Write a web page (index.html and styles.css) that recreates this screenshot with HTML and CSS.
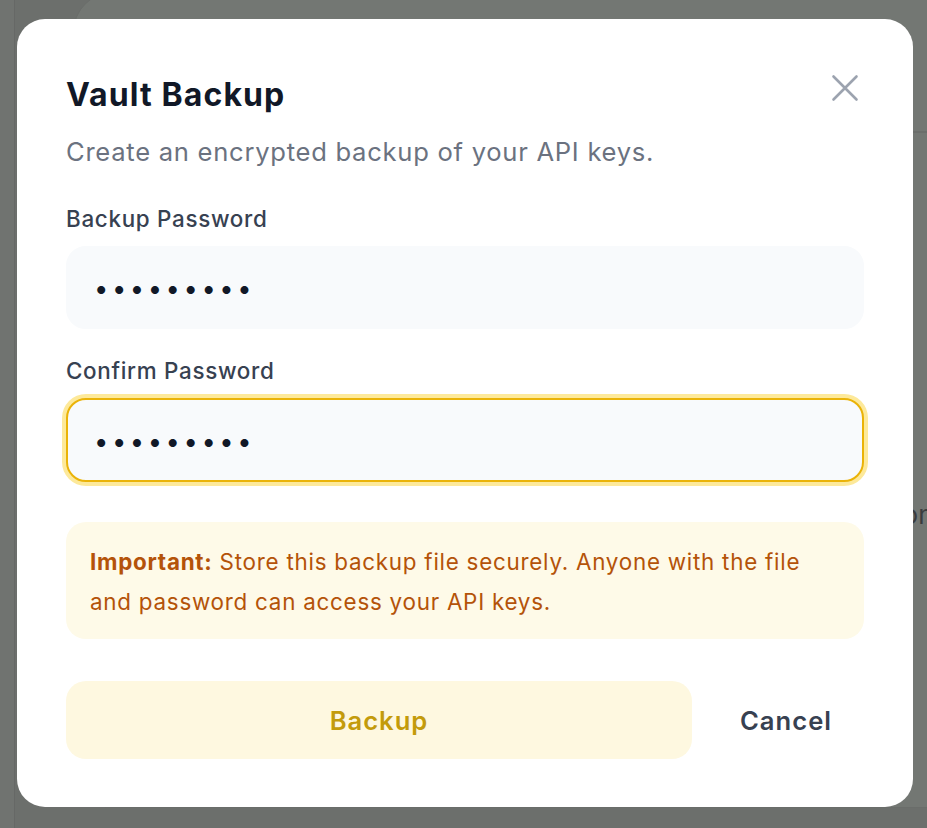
FILE: index.html
```html
<!DOCTYPE html>
<html lang="en">
<head>
<meta charset="utf-8">
<title>Vault Backup</title>
<link rel="stylesheet" href="styles.css">
</head>
<body>
<div class="app">
  <div class="app-rail"></div>
  <div class="app-card">
    <div class="app-card-head"></div>
    <div class="app-card-text">Option</div>
  </div>
</div>
<div class="overlay">
  <div class="modal" role="dialog" aria-labelledby="title">
    <button class="close" aria-label="Close">
      <svg width="28" height="28" viewBox="0 0 28 28" fill="none" stroke="currentColor" stroke-width="2.6" stroke-linecap="round"><path d="M2.5 2.5 L25.5 25.5 M25.5 2.5 L2.5 25.5"/></svg>
    </button>
    <h2 id="title" class="title">Vault Backup</h2>
    <p class="subtitle">Create an encrypted backup of your API keys.</p>
    <label class="label" for="pw1">Backup Password</label>
    <input class="field" id="pw1" type="password" value="secret123">
    <label class="label label-2" for="pw2">Confirm Password</label>
    <input class="field field-focus" id="pw2" type="password" value="secret123">
    <div class="notice"><strong>Important:</strong> Store this backup file securely. Anyone with the file and password can access your API keys.</div>
    <div class="actions">
      <button class="btn-primary">Backup</button>
      <button class="btn-cancel">Cancel</button>
    </div>
  </div>
</div>
</body>
</html>
```
FILE: styles.css
```css
html, body {
  margin: 0;
  padding: 0;
}
body {
  width: 927px;
  height: 828px;
  overflow: hidden;
  position: relative;
  font-family: Inter, "Noto Sans", sans-serif;
  background: #6c6f6c;
}
.app {
  display: flex;
  height: 828px;
}
.app-rail {
  width: 14px;
  border-right: 1px solid #666866;
  background: #707370;
}
.app-card {
  flex: 1;
  margin: -8px -40px 20px 58px;
  border-radius: 40px;
  background: #737773;
  border: 1px solid #6a6d6a;
  display: flex;
  flex-direction: column;
  overflow: hidden;
}
.app-card-head {
  height: 138px;
  border-bottom: 2px solid #6b6e6b;
}
.app-card-text {
  margin-top: 366px;
  padding-left: 778px;
  font-size: 26px;
  color: #3a3c3f;
  white-space: nowrap;
}
.overlay {
  position: absolute;
  inset: 0;
  display: flex;
  align-items: flex-start;
  justify-content: center;
}
.modal {
  position: relative;
  box-sizing: border-box;
  width: 896px;
  margin-top: 19px;
  margin-left: 3px;
  background: #ffffff;
  border-radius: 28px;
  padding: 56px 49px 48px 49px;
  display: flex;
  flex-direction: column;
}
.close {
  position: absolute;
  top: 55px;
  right: 54px;
  width: 28px;
  height: 28px;
  padding: 0;
  border: 0;
  background: none;
  color: #9ca3af;
  display: flex;
}
.title {
  margin: 0;
  font-size: 32px;
  line-height: 40px;
  font-weight: 700;
  color: #111827;
  letter-spacing: 1.1px;
}
.subtitle {
  margin: 18px 0 0 0;
  font-size: 25.6px;
  line-height: 38px;
  color: #6b7280;
  letter-spacing: 0.72px;
}
.label {
  margin-top: 32px;
  font-size: 22.4px;
  line-height: 32px;
  font-weight: 500;
  color: #374151;
  letter-spacing: 0.7px;
}
.label-2 {
  margin-top: 26px;
}
.field {
  box-sizing: border-box;
  margin-top: 11px;
  width: 100%;
  height: 83px;
  border: 2px solid #f8fafc;
  background: #f8fafc;
  border-radius: 20px;
  padding: 0 26px;
  font-family: Inter, sans-serif;
  font-size: 25.6px;
  letter-spacing: 3.5px;
  color: #111827;
  outline: none;
}
.field-focus {
  margin-top: 11px;
  height: 84px;
  border-color: #eab308;
  box-shadow: 0 0 0 4px #fde99a;
}
.notice {
  margin-top: 40px;
  background: #fefae8;
  border-radius: 20px;
  padding: 20px 24px 17px 24px;
  font-size: 22.4px;
  line-height: 40px;
  color: #b45309;
  letter-spacing: 0.75px;
}
.notice strong {
  font-weight: 700;
}
.actions {
  margin-top: 42px;
  display: flex;
  gap: 16px;
}
.btn-primary {
  flex: 1;
  height: 78px;
  border: 0;
  border-radius: 20px;
  background: #fef8e0;
  color: #c39b0b;
  font-family: Inter, sans-serif;
  font-size: 25.6px;
  font-weight: 600;
  letter-spacing: 1px;
}
.btn-cancel {
  width: 156px;
  height: 78px;
  border: 0;
  border-radius: 20px;
  background: transparent;
  color: #374151;
  font-family: Inter, sans-serif;
  font-size: 25.6px;
  font-weight: 600;
  letter-spacing: 1px;
}
```
